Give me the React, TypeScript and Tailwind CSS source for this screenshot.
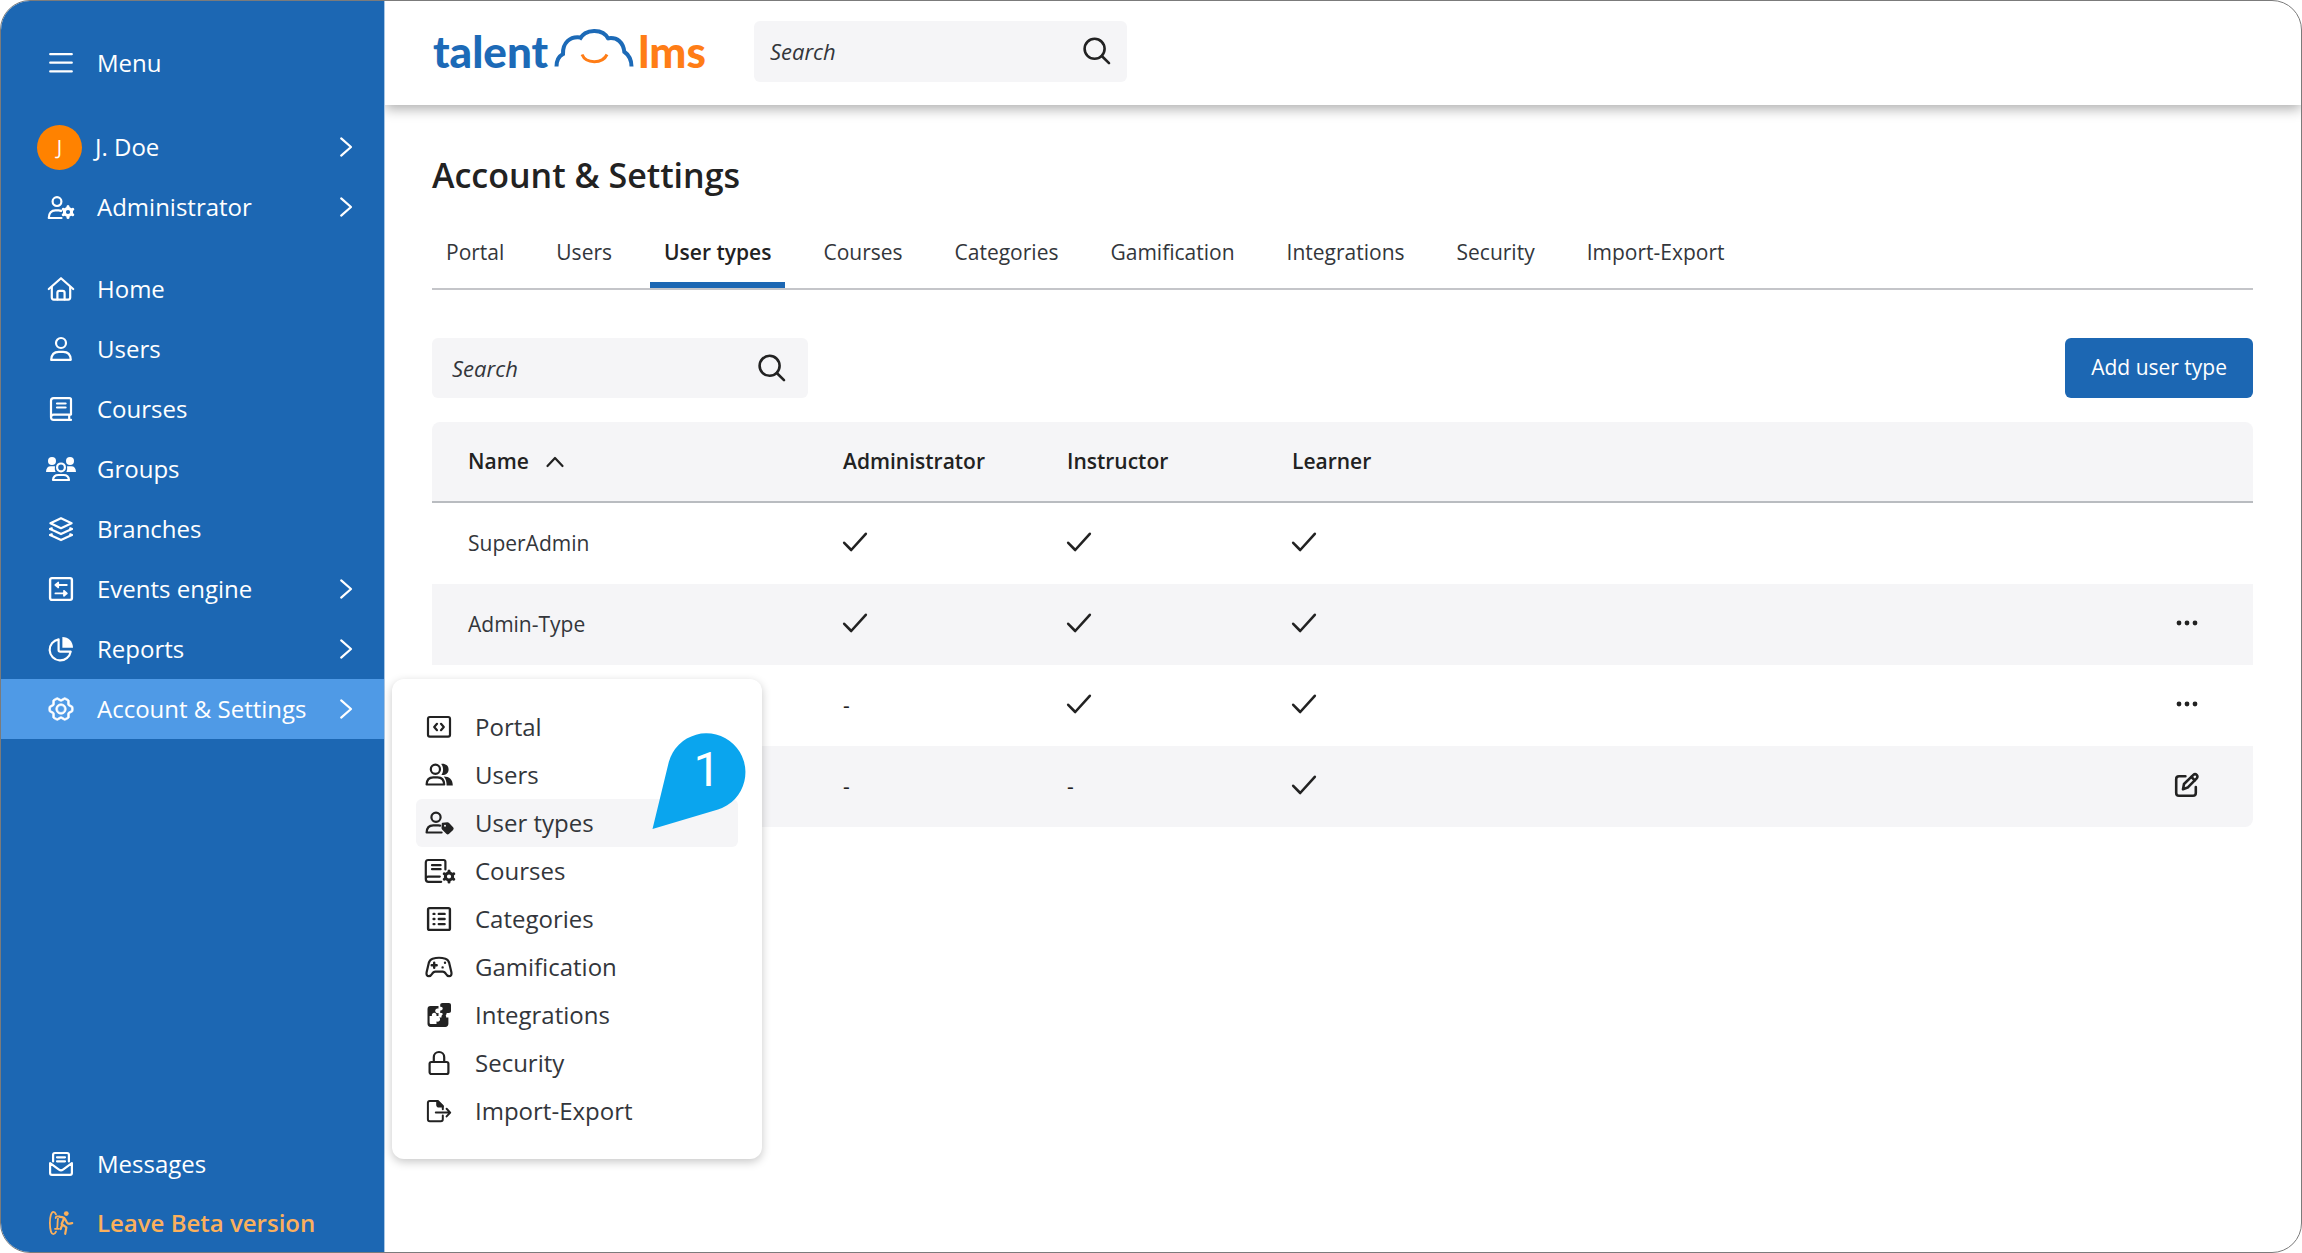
import type { ReactNode } from "react";
import { PiGearSix } from "react-icons/pi";

type IconProps = { children: ReactNode; box?: string; className?: string; width?: number };

function Icon({ children, box = "0 0 24 24", className = "size-6", width = 2.2 }: IconProps) {
  return (
    <svg
      viewBox={box}
      className={`shrink-0 overflow-visible ${className}`}
      fill="none"
      stroke="currentColor"
      strokeWidth={width}
      strokeLinecap="round"
      strokeLinejoin="round"
      aria-hidden="true"
    >
      {children}
    </svg>
  );
}

/* Small solid cog with six teeth, centred on (x, y). */
function Cog({ x, y }: { x: number; y: number }) {
  return (
    <g transform={`translate(${x} ${y})`}>
      <circle r="3.6" strokeWidth="3" />
      {[0, 60, 120, 180, 240, 300].map((a) => (
        <path key={a} d="M0-4.8V-5.5" strokeWidth="3" transform={`rotate(${a})`} />
      ))}
    </g>
  );
}

const icons = {
  menu: (
    <Icon width={2.2}>
      <path d="M1.2 3.2h21.6M1.2 11.7h21.6M1.2 20.4h21.6" />
    </Icon>
  ),
  admin: (
    <Icon>
      <circle cx="8" cy="6.6" r="4.4" />
      <path d="M12.5 23H-.2c0-5 2.8-7.6 6.6-7.6h3.2c.9 0 1.8.2 2.6.5" />
      <Cog x={19} y={17} />
    </Icon>
  ),
  home: (
    <Icon>
      <path d="M-.2 12 12 1.2 24.2 12" />
      <path d="M2.8 10v10.6c0 1.3.7 2 2 2h14.4c1.3 0 2-.7 2-2V10" />
      <path d="M8.4 22.4v-6.6c0-1.2.7-1.9 1.9-1.9h3.4c1.2 0 1.9.7 1.9 1.9v6.6" />
    </Icon>
  ),
  user: (
    <Icon>
      <circle cx="12" cy="6" r="5" />
      <path d="M2.2 22.9c.2-5.2 3-8 7.6-8h4.4c4.600 0 7.400 2.800 7.600 8z" />
    </Icon>
  ),
  book: (
    <Icon>
      <path d="M22 17.600V2.600c0-1-.5-1.500-1.500-1.500H4.600C3 1.100 2 2.100 2 3.700v16.600c0 1.600 1 2.600 2.600 2.600H22M22 17.600H4.600C3 17.600 2 18.600 2 20.200M20.200 17.800v5" />
      <path d="M8 6.500h8.600M8 10.500h8.600" />
    </Icon>
  ),
  groups: (
    <Icon>
      <g fill="currentColor" stroke="none">
        <circle cx="3" cy="4" r="4" />
        <circle cx="21" cy="4" r="4" />
        <path d="M-3 15c.1-3.800 1.700-5.800 4.800-5.800h2.700c.6 0 1.200.1 1.600.3-.5 1.700-.4 3.600.5 5.500zM27 15c-.1-3.800-1.700-5.800-4.800-5.800h-2.700c-.6 0-1.200.1-1.600.3.5 1.700.4 3.600-.5 5.500z" />
      </g>
      <circle cx="12" cy="10.400" r="3.900" />
      <path d="M4 23c.3-3.200 2.300-5 5.400-5h5.200c3.100 0 5.100 1.800 5.400 5z" />
    </Icon>
  ),
  layers: (
    <Icon>
      <path d="M12 1.200 22.600 6.200 12 11.200 1.400 6.200z" />
      <path d="M1.200 12 12 17.100 22.800 12M1.200 18 12 23.100 22.800 18" />
      <path d="M1.200 12l1.600-.7M22.800 12l-1.600-.7M1.200 18l1.600-.7M22.800 18l-1.600-.7" />
    </Icon>
  ),
  events: (
    <Icon width={2.400}>
      <rect x="1.100" y="1.100" width="21.800" height="21.800" rx="1.800" />
      <path d="M6.400 8h11.400M9.200 5.600v4.800M6.400 8l2.800-2.400M6.400 8l2.800 2.400M6.400 16.400h11.400M15 14v4.800M17.800 16.400 15 14M17.800 16.400 15 18.800" strokeWidth="1.800" />
    </Icon>
  ),
  pie: (
    <Icon>
      <path d="M9.600 2.300A10.600 10.600 0 1 0 21.700 14.600H11.200c-1 0-1.600-.6-1.600-1.600z" />
      <path d="M13.400 0C19.600.2 23.800 4.400 24 10.800H13.400z" fill="currentColor" stroke="none" />
    </Icon>
  ),
  gear: <PiGearSix className="-m-0.5 size-7 shrink-0" stroke="currentColor" strokeWidth={6} aria-hidden="true" />,
  messages: (
    <Icon>
      <path d="M1.100 11.200v9.900c0 1.200.6 1.800 1.800 1.800h18.200c1.200 0 1.800-.6 1.800-1.800v-9.900L14 17.700c-1.400 1-2.600 1-4 0z" />
      <path d="M4.100 9.400V2.800c0-1.200.6-1.800 1.800-1.800h12.200c1.200 0 1.800.6 1.800 1.800v6.600M8 5.300h8M8 9.300h8" />
    </Icon>
  ),
  leave: (
    <Icon width={1.800}>
      <path d="M7 3.400C6.300 1.600 5.300.9 4.300.9 2.300.9.900 5.600.900 12s1.400 11.100 3.400 11.100c1 0 2-.8 2.700-2.500" />
      <path d="M10.600 5.400H8.200c-1 0-1.500.6-1.500 1.600M9 7.600c-.7 3-.2 6-.8 9.200M6 17.800h4" />
      <path d="M10.600 5.800c2 0 3.400.3 4.600 1.200L12.600 13l4.800 3.400-1.200 6.400M12.800 14.800 11.600 18M15.600 7.500c1.500 1.300 1.800 4.700 3.600 5.100 1.400.3 2.600-.3 4-.5" strokeWidth="2.200" />
      <circle cx="17.300" cy="2.600" r="2.400" fill="currentColor" stroke="none" />
    </Icon>
  ),
  portal: (
    <Icon>
      <rect x="1" y="2" width="22" height="19.600" rx="1.800" />
      <path d="M10 8.800 7.200 12l2.800 3.200M14 8.800l2.800 3.200-2.800 3.200" />
    </Icon>
  ),
  users: (
    <Icon>
      <circle cx="8.400" cy="6.200" r="4.600" />
      <path d="M-.4 21.500c.2-4.600 2.600-7.100 6.600-7.100h4.400c4 0 6.400 2.500 6.600 7.100z" />
      <g fill="currentColor" stroke="none">
        <path d="M14.200.9c4.600-.4 7.400 1.900 7.400 5.500s-2.800 5.900-7.200 5.500c2.300-3 2.300-7.900-.2-11z" />
        <path d="M16.800 13.600c5.600.1 9 3 9 9h-6.200c.1-3.600-.7-6.600-2.800-9z" />
      </g>
    </Icon>
  ),
  userTag: (
    <Icon>
      <circle cx="9" cy="6.200" r="4.600" />
      <path d="M14.600 21.500H-.4c.2-4.600 2.600-7.100 6.600-7.100h5c.7 0 1.300.1 1.900.2" />
      <path d="M15.500 12.400 20.400 12c.5 0 .9.100 1.200.4l4 4.300c.5.600.5 1.200 0 1.700l-4 3.900c-.6.500-1.200.5-1.800 0l-4.200-4.300c-.3-.3-.4-.7-.4-1.200z" fill="currentColor" strokeWidth="1.400" />
      <circle cx="18" cy="14.800" r="1" fill="#f5f5f7" stroke="none" />
    </Icon>
  ),
  courseCog: (
    <Icon>
      <path d="M18.400 10.400V2.800c0-1.200-.6-1.800-1.800-1.800H1.200C-.4 1-1.200 1.900-1.200 3.500V20c0 1.800.9 2.800 2.700 2.800h12.700M12.800 17.600H1.300c-1.600 0-2.500.9-2.500 2.500" />
      <path d="M5 6.200h8.600M5 10.200h8.600" />
      <Cog x={22} y={17.500} />
    </Icon>
  ),
  categories: (
    <Icon>
      <rect x="1.100" y="1.100" width="21.800" height="21.800" rx="1.400" strokeWidth="2.400" />
      <path d="M6.600 6.900h.8M6.600 12h.8M6.600 17.100h.8M11.800 6.900h5.800M11.800 12h5.800M11.800 17.100h5.800" strokeWidth="2.400" />
    </Icon>
  ),
  gamepad: (
    <Icon>
      <path d="M5.600 3.800c4-1.300 8.800-1.300 12.800 0 2.200.7 3.200 1.900 3.800 4.100l2.200 9.300c.5 2.400-.4 4-2.300 4-1.500 0-2.400-.7-3.100-2.100-.9-1.800-1.700-2.500-3.400-2.500H8.400c-1.700 0-2.500.7-3.400 2.500-.7 1.400-1.600 2.100-3.100 2.100-1.900 0-2.800-1.600-2.300-4l2.200-9.300c.6-2.200 1.600-3.400 3.800-4.100z" />
      <path d="M7.200 7.800v5M4.700 10.300h5M18 7.800h.01M15.600 12.400h.01" strokeWidth="2.400" />
    </Icon>
  ),
  puzzle: (
    <Icon>
      <g stroke="none" fill="currentColor">
        <path d="M3.500 3h8v2.600c-1.800-.6-3.300.5-3.300 2.200s1.500 2.800 3.300 2.200v3H9.400c.6-1.800-.5-3.300-2.200-3.300S4.400 11.200 5 13H2.600v6.600c0 1 .5 1.500 1.500 1.500h5.400v-2.500c2 .6 3.600-.5 3.600-2.300 0-.8-.3-1.400-.9-1.800h2.300c-.3-2 .7-3.300 2.300-3.300s2.600 1.300 2.300 3.300h2.300v6.300c0 2-1.100 3.100-3.100 3.100H3.600c-2 0-3.100-1.100-3.100-3.100V6c0-2 1-3 3-3z" />
        <path d="M15.500 0h6.300C23.300 0 24 .7 24 2.200v5.600c0 1.500-.7 2.200-2.200 2.200h-2.200c.2 1.400-.7 2.400-2.100 2.400S15.200 11.400 15.400 10h-2.200V7.400c1.500.3 2.500-.5 2.500-1.800s-1-2.100-2.500-1.800V2.300C13.200.8 14 0 15.500 0z" />
      </g>
    </Icon>
  ),
  lock: (
    <Icon>
      <rect x="2.600" y="11" width="18.800" height="12" rx="1.800" />
      <path d="M6.800 10.600V6.200a5.200 5.200 0 0 1 10.400 0v4.400" />
    </Icon>
  ),
  exportFile: (
    <Icon width={2}>
      <path d="M15.800 16.400v3.800c0 1.300-.7 2-2 2H2.800c-1.200 0-1.900-.7-1.900-1.900V3.800c0-1.200.7-1.900 1.900-1.900h8l5 5v3.400" />
      <path d="M10.200 2v3.800c0 1.200.6 1.800 1.800 1.800h3.800z" fill="currentColor" />
      <path d="M8.800 13.600h14M19.600 9.800l3.600 3.800-3.600 3.800" />
    </Icon>
  ),
};

type IconName = keyof typeof icons;

const Chevron = () => (
  <Icon className="ml-auto size-6" width={2.200}>
    <path d="M7.200 3.400 17 12l-9.800 8.600" />
  </Icon>
);

const SearchIcon = () => (
  <Icon className="size-7" box="0 0 28 28" width={2.600}>
    <circle cx="11.600" cy="11.800" r="10" />
    <path d="m18.800 19 7.200 7.200" />
  </Icon>
);

const Check = () => (
  <Icon className="mb-1 size-6" width={2.600}>
    <path d="M1.200 12.800 8.200 20 22.800 3.800" />
  </Icon>
);

const Dots = () => (
  <svg viewBox="0 0 24 24" className="size-6" fill="currentColor" aria-hidden="true">
    <circle cx="4" cy="12" r="2.400" />
    <circle cx="12" cy="12" r="2.400" />
    <circle cx="20" cy="12" r="2.400" />
  </svg>
);

const Edit = () => (
  <Icon width={2.600}>
    <path d="M10.400 3.200H4c-1.800 0-2.800 1-2.800 2.800v14c0 1.800 1 2.800 2.800 2.800h14c1.800 0 2.800-1 2.800-2.800v-6" />
    <path d="m8 16.200 1-5.200L18.400 1.900c1-1 2.300-1 3.300 0s1 2.400 0 3.400L12.600 14.600z" />
    <path d="m16.400 4 3.400 3.400" />
  </Icon>
);

function NavRow({ icon, label, arrow = false, active = false }: { icon: IconName; label: string; arrow?: boolean; active?: boolean }) {
  return (
    <button
      type="button"
      className={`flex h-15 w-full items-center gap-6 pr-[26px] pl-12 text-left ${active ? "bg-[#4f9ae6]" : ""}`}
    >
      {icons[icon]}
      <span>{label}</span>
      {arrow && <Chevron />}
    </button>
  );
}

const submenu: { icon: IconName; label: string }[] = [
  { icon: "portal", label: "Portal" },
  { icon: "users", label: "Users" },
  { icon: "userTag", label: "User types" },
  { icon: "courseCog", label: "Courses" },
  { icon: "categories", label: "Categories" },
  { icon: "gamepad", label: "Gamification" },
  { icon: "puzzle", label: "Integrations" },
  { icon: "lock", label: "Security" },
  { icon: "exportFile", label: "Import-Export" },
];

function Submenu() {
  return (
    <div className="absolute top-0 left-full ml-2 w-[370px] rounded-xl bg-white p-6 text-[#33363b] shadow-[0_3px_10px_rgba(0,0,0,0.22)]">
      <ul>
        {submenu.map(({ icon, label }) => (
          <li key={label}>
            <a
              href="#"
              className={`flex h-12 items-center gap-6 rounded-md pl-[11px] ${label === "User types" ? "bg-[#f5f5f7]" : ""}`}
            >
              <span className="text-[#222]">{icons[icon]}</span>
              <span>{label}</span>
            </a>
          </li>
        ))}
      </ul>
      <div className="absolute top-[54px] left-[260px] h-24 w-[94px]">
        <svg viewBox="0 0 94 96" className="absolute inset-0 size-full" fill="#0aa5ee" aria-hidden="true">
          <path d="M.5 96 16.800 29A39 39 0 1 1 66 76.500z" />
        </svg>
        <span className="relative block pl-4 text-center font-[Roboto,sans-serif] text-5xl leading-[74px] text-white">1</span>
      </div>
    </div>
  );
}

function Sidebar() {
  return (
    <nav className="relative z-20 flex w-[384px] shrink-0 flex-col border-r border-[#a9c6e4] bg-[#1c67b3] pt-8 text-2xl text-white">
      <NavRow icon="menu" label="Menu" />
      <button type="button" className="mt-6 flex h-15 w-full items-center gap-[13px] pr-[26px] pl-9 text-left">
        <span className="flex size-[45px] items-center justify-center rounded-full bg-[#ff8200] text-xl">J</span>
        <span>J. Doe</span>
        <Chevron />
      </button>
      <NavRow icon="admin" label="Administrator" arrow />
      <ul className="mt-[22px]">
        <li><NavRow icon="home" label="Home" /></li>
        <li><NavRow icon="user" label="Users" /></li>
        <li><NavRow icon="book" label="Courses" /></li>
        <li><NavRow icon="groups" label="Groups" /></li>
        <li><NavRow icon="layers" label="Branches" /></li>
        <li><NavRow icon="events" label="Events engine" arrow /></li>
        <li><NavRow icon="pie" label="Reports" arrow /></li>
        <li className="relative">
          <NavRow icon="gear" label="Account & Settings" arrow active />
          <Submenu />
        </li>
      </ul>
      <div className="mt-auto">
        <NavRow icon="messages" label="Messages" />
        <a href="#" className="flex h-[58px] items-center gap-6 pl-12 font-semibold text-[#fbb05c]">
          {icons.leave}
          Leave Beta version
        </a>
      </div>
    </nav>
  );
}

function Logo() {
  return (
    <a href="#" aria-label="talent lms" className="flex items-end font-[Lato,sans-serif] text-[44px] leading-[52px] font-black text-[#1c6ab7]">
      <span>talent</span>
      <svg viewBox="0 0 80 52" className="mr-1 ml-1.5 h-[52px] w-20" fill="none" strokeLinecap="butt" aria-hidden="true">
        <path
          d="M2.500 41.500C2.500 36 4.500 31.500 9 29 8.500 18 16 10.500 27 12.500M25.500 14.500C31 3.500 49 3 54.500 14M53 13.500C63 11.500 69.500 17 70.500 28M70 26.500C75 30 77.500 35 77.500 41.500"
          stroke="#1c6ab7"
          strokeWidth="4"
        />
        <path d="M28 29.500C32 39 48.500 39 53 29.500" stroke="#ff7d16" strokeWidth="3" />
      </svg>
      <span className="text-[#ff7d16]">lms</span>
    </a>
  );
}

function SearchBox({ label, className }: { label: string; className: string }) {
  return (
    <div className={`flex items-center rounded-md bg-[#f5f5f7] ${className}`}>
      <input
        type="search"
        aria-label={label}
        placeholder="Search"
        className="h-full min-w-0 flex-1 bg-transparent text-[22px] italic outline-none placeholder:text-[#33363b]"
      />
      <button type="button" aria-label="Search">
        <SearchIcon />
      </button>
    </div>
  );
}

const tabs = ["Portal", "Users", "User types", "Courses", "Categories", "Gamification", "Integrations", "Security", "Import-Export"];

type Row = { name: string; roles: boolean[]; action?: "more" | "edit" };

const rows: Row[] = [
  { name: "SuperAdmin", roles: [true, true, true] },
  { name: "Admin-Type", roles: [true, true, true], action: "more" },
  { name: "", roles: [false, true, true], action: "more" },
  { name: "", roles: [false, false, true], action: "edit" },
];

function UserTypes() {
  return (
    <table className="mt-6 w-full table-fixed border-separate border-spacing-0 overflow-hidden rounded-lg text-left text-[21px] text-[#33363b]">
      <thead>
        <tr className="h-[81px] bg-[#f5f5f7] text-[#222] *:border-b-2 *:border-[#b9bcc0] *:font-semibold">
          <th className="w-[411px] pl-9">
            <button type="button" className="flex items-center gap-4">
              Name
              <Icon className="size-5" box="0 0 20 20">
                <path d="m2.500 14 7.500-8 7.500 8" />
              </Icon>
            </button>
          </th>
          <th className="w-56">Administrator</th>
          <th className="w-[225px]">Instructor</th>
          <th>Learner</th>
          <th className="w-24" aria-label="Actions" />
        </tr>
      </thead>
      <tbody>
        {rows.map(({ name, roles, action }, i) => (
          <tr key={i} className="h-[81px] even:bg-[#f5f5f7]">
            <td className="pl-9">{name}</td>
            {roles.map((on, j) => (
              <td key={j} className="text-[#222]">{on ? <Check /> : "-"}</td>
            ))}
            <td className="text-[#222]">
              {action && (
                <button type="button" aria-label={action === "edit" ? "Edit" : "More options"} className="mb-1 ml-[18px] flex">
                  {action === "edit" ? <Edit /> : <Dots />}
                </button>
              )}
            </td>
          </tr>
        ))}
      </tbody>
    </table>
  );
}

export default function App() {
  return (
    <div className="flex min-h-screen overflow-hidden rounded-[30px] border border-[#7b7b7b] bg-white font-['Open_Sans',sans-serif] text-[#222]">
      <Sidebar />
      <div className="flex min-w-0 flex-1 flex-col">
        <header className="flex h-[104px] items-center gap-12 pb-1 pl-12 shadow-[0_4px_12px_rgba(0,0,0,0.32)]">
          <Logo />
          <SearchBox label="Search the portal" className="h-[61px] w-[373px] pr-4 pl-4" />
        </header>
        <main className="pr-12 pl-[47px]">
          <h1 className="mt-12 text-[34px] leading-[44px] font-semibold">Account &amp; Settings</h1>
          <nav className="mt-7 flex gap-6 border-b-2 border-[#c4c5c9] text-[21px] leading-7 text-[#33363b]">
            {tabs.map((tab) => (
              <a
                key={tab}
                href="#"
                className={`px-3.5 pt-[13px] pb-4 ${tab === "User types" ? "border-b-6 border-[#1c67b3] font-semibold text-[#222]" : ""}`}
              >
                {tab}
              </a>
            ))}
          </nav>
          <div className="mt-12 flex items-center justify-between">
            <SearchBox label="Search user types" className="h-15 w-[376px] pr-[22px] pl-5" />
            <button type="button" className="h-15 rounded-md bg-[#1c67b3] px-[26px] text-[21px] text-white">
              Add user type
            </button>
          </div>
          <UserTypes />
        </main>
      </div>
    </div>
  );
}
